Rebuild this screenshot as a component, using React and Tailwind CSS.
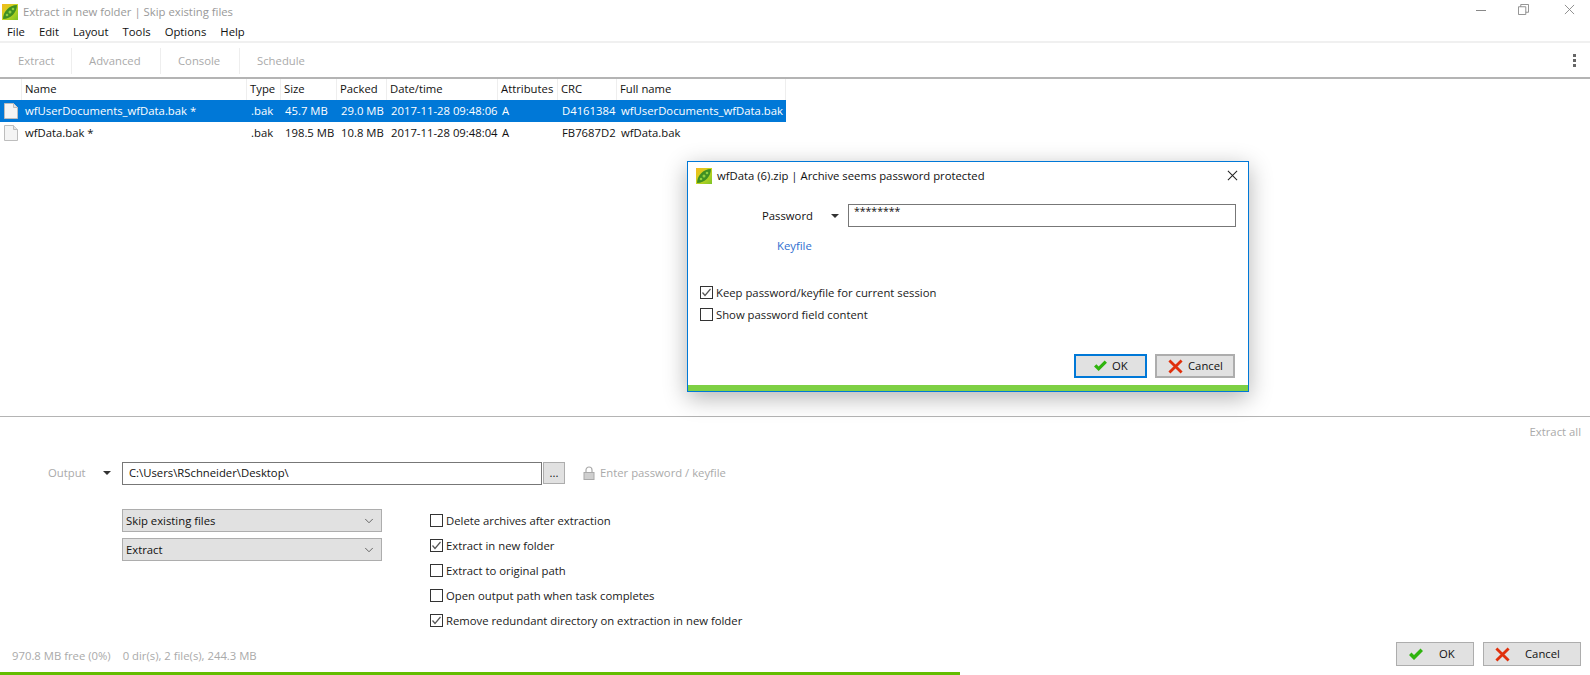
import React from 'react';
import { ChevronDown } from 'lucide-react';

const font = 'font-["Open_Sans","Noto_Sans",sans-serif]';

const columns = [
  { label: 'Name', w: 'w-[226px]', first: true },
  { label: 'Type', w: 'w-[34px]' },
  { label: 'Size', w: 'w-[56px]' },
  { label: 'Packed', w: 'w-[50px]' },
  { label: 'Date/time', w: 'w-[111px]' },
  { label: 'Attributes', w: 'w-[60px]' },
  { label: 'CRC', w: 'w-[59px]' },
  { label: 'Full name', w: 'w-[169px]' },
];

const rows = [
  ['wfUserDocuments_wfData.bak *', '.bak', '45.7 MB', '29.0 MB', '2017-11-28 09:48:06', 'A', 'D4161384', 'wfUserDocuments_wfData.bak'],
  ['wfData.bak *', '.bak', '198.5 MB', '10.8 MB', '2017-11-28 09:48:04', 'A', 'FB7687D2', 'wfData.bak'],
];

function PeaLogo({ className }) {
  return (
    <svg viewBox="0 0 16 16" className={className}>
      <defs>
        <linearGradient id="pea-bg" x1="0" y1="0" x2="1" y2="1">
          <stop offset="0" stopColor="#f7b81a" />
          <stop offset="0.5" stopColor="#c8d620" />
          <stop offset="1" stopColor="#7cc428" />
        </linearGradient>
      </defs>
      <rect width="16" height="16" fill="url(#pea-bg)" />
      <path d="M1 15 C1 8 7 1 15 1 C15 8 9 15 1 15 Z" fill="#3f8f22" />
      <circle cx="5" cy="11" r="1.3" fill="#8fd040" />
      <circle cx="8" cy="8" r="1.5" fill="#8fd040" />
      <circle cx="11" cy="5" r="1.3" fill="#8fd040" />
    </svg>
  );
}

function FileIcon() {
  return (
    <svg viewBox="0 0 14 16" className="w-[14px] h-[16px]">
      <path d="M0.5 0.5 H9.5 L13.5 4.5 V15.5 H0.5 Z" fill="#f4f4f4" stroke="#bdbdbd" />
      <path d="M9.5 0.5 V4.5 H13.5" fill="#e4e4e4" stroke="#bdbdbd" />
    </svg>
  );
}

function Check({ className }) {
  return (
    <svg viewBox="0 0 16 13" className={className}>
      <path d="M1 7 L3.5 4.5 L6 7 L12.5 0.5 L15 3 L6 12 Z" fill="#2fb40e" />
    </svg>
  );
}

function Cross({ className }) {
  return (
    <svg viewBox="0 0 16 16" className={className}>
      <path d="M1.5 1.5 L14.5 14.5 M14.5 1.5 L1.5 14.5" stroke="#e0300c" strokeWidth="3" />
    </svg>
  );
}

function Caret() {
  return <span className="block w-0 h-0 border-x-[4px] border-x-transparent border-t-[4px] border-t-[#333]" />;
}

function CheckBox({ checked, label }) {
  return (
    <label className="flex items-center gap-[3px] h-[13px] text-[#1a1a1a]">
      <span className="w-[13px] h-[13px] border border-[#333] bg-white flex items-center justify-center shrink-0">
        {checked && (
          <svg viewBox="0 0 11 11" className="w-[11px] h-[11px]">
            <path d="M1.5 5.5 L4 8.5 L9.5 2" fill="none" stroke="#555" strokeWidth="1.2" />
          </svg>
        )}
      </span>
      <span className="whitespace-nowrap">{label}</span>
    </label>
  );
}

function Combo({ label }) {
  return (
    <div className="w-[260px] h-[23px] bg-[#e1e1e1] border border-[#adadad] flex items-center justify-between pl-[3px] pr-[5px] text-[#111]">
      <span>{label}</span>
      <ChevronDown className="w-[14px] h-[14px] text-[#555]" strokeWidth={1.5} />
    </div>
  );
}

function ActionButton({ children, className }) {
  return (
    <button className={`h-[24px] bg-[#e1e1e1] flex items-center text-[#111] ${className}`}>{children}</button>
  );
}

export default function App() {
  return (
    <div className={`relative w-[1590px] h-[675px] overflow-hidden bg-white flex flex-col text-[11.3px] leading-[16px] ${font}`}>
      {/* title bar */}
      <div className="h-[23px] flex items-center shrink-0">
        <PeaLogo className="w-[16px] h-[16px] ml-[2px] mr-[5px]" />
        <span className="text-[#999]">Extract in new folder | Skip existing files</span>
        <div className="ml-auto mb-[4px] flex items-center text-[#777]">
          <svg viewBox="0 0 12 12" className="w-[12px] h-[12px] mr-[31px]">
            <path d="M1 6.5 H11" stroke="#888" />
          </svg>
          <svg viewBox="0 0 12 12" className="w-[11px] h-[11px] mr-[35px]">
            <path d="M0.5 3 H8.5 V11.5 H0.5 Z M3 3 V0.5 H11.5 V9 H8.5" fill="none" stroke="#888" />
          </svg>
          <svg viewBox="0 0 12 12" className="w-[11px] h-[11px] mr-[15px]">
            <path d="M1 1 L11 11 M11 1 L1 11" stroke="#888" />
          </svg>
        </div>
      </div>

      {/* menu */}
      <div className="h-[18px] flex items-center gap-[14px] pl-[7px] text-[#111] shrink-0">
        {['File', 'Edit', 'Layout', 'Tools', 'Options', 'Help'].map((m) => (
          <span key={m}>{m}</span>
        ))}
      </div>

      {/* toolbar */}
      <div className="h-[38px] pt-[1px] border-t-2 border-[#f0f0f0] border-b-2 border-b-[#b4b4b4] flex items-center text-[#aaa] shrink-0">
        <span className="w-[71px] pl-[18px]">Extract</span>
        <span className="w-[89px] h-[26px] border-l border-[#eee] pl-[17px] leading-[26px]">Advanced</span>
        <span className="w-[79px] h-[26px] border-l border-[#eee] pl-[17px] leading-[26px]">Console</span>
        <span className="h-[26px] border-l border-[#eee] pl-[17px] leading-[26px]">Schedule</span>
        <div className="ml-auto mr-[14px] flex flex-col gap-[2px]">
          <span className="w-[3px] h-[3px] bg-[#666]" />
          <span className="w-[3px] h-[3px] bg-[#666]" />
          <span className="w-[3px] h-[3px] bg-[#666]" />
        </div>
      </div>

      {/* file list */}
      <div className="flex-1 border-b border-[#b4b4b4]">
        <div className="flex h-[21px] items-center text-[#111]">
          {columns.map((c) => (
            <div
              key={c.label}
              className={`${c.w} h-full pb-[2px] flex items-center whitespace-nowrap border-r border-[#eeeeee] ${c.first ? 'ml-[21px] pl-[3px] border-l' : 'pl-[3px]'}`}
            >
              {c.label}
            </div>
          ))}
        </div>
        {rows.map((row, i) => (
          <div
            key={row[0]}
            className={`flex h-[22px] items-center w-[786px] ${i === 0 ? 'bg-[#0078d7] text-white' : 'text-[#111]'}`}
          >
            <div className="w-[25px] pl-[4px] flex items-center">
              <FileIcon />
            </div>
            {row.map((cell, j) => (
              <div key={j} className={`${j === 0 ? 'w-[222px]' : `${columns[j].w} pl-[4px]`} whitespace-nowrap`}>
                {cell}
              </div>
            ))}
          </div>
        ))}
      </div>

      {/* bottom panel */}
      <div className="h-[258px] shrink-0 flex flex-col">
        <div className="h-[27px] flex items-center justify-end pr-[9px] pt-[3px] text-[#aaa]">Extract all</div>
        <div className="mt-[17px] h-[24px] flex items-center">
          <span className="w-[103px] pl-[48px] text-[#aaa]">Output</span>
          <span className="w-[19px]">
            <Caret />
          </span>
          <div className="w-[420px] h-[23px] border border-[#777] flex items-center pl-[6px] text-[#111]">C:\Users\RSchneider\Desktop\</div>
          <div className="ml-[1px] w-[22px] h-[22px] bg-[#e1e1e1] border border-[#adadad] flex items-center justify-center text-[#111]">...</div>
          <svg viewBox="0 0 12 14" className="ml-[18px] w-[12px] h-[14px]">
            <path d="M3 6.5 V4 A3 3 0 0 1 9 4 V6.5" fill="none" stroke="#aaa" strokeWidth="1.2" />
            <rect x="1" y="6.5" width="10" height="7" fill="#cfcfcf" stroke="#aaa" />
          </svg>
          <span className="ml-[5px] text-[#aaa]">Enter password / keyfile</span>
        </div>
        <div className="mt-[24px] flex">
          <div className="ml-[122px] flex flex-col gap-[6px]">
            <Combo label="Skip existing files" />
            <Combo label="Extract" />
          </div>
          <div className="ml-[48px] mt-[5px] flex flex-col gap-[12px]">
            <CheckBox label="Delete archives after extraction" />
            <CheckBox checked label="Extract in new folder" />
            <CheckBox label="Extract to original path" />
            <CheckBox label="Open output path when task completes" />
            <CheckBox checked label="Remove redundant directory on extraction in new folder" />
          </div>
        </div>
        <div className="mt-auto h-[35px] flex items-start">
          <span className="ml-[12px] mt-[11px] text-[#aaa]">970.8 MB free (0%)</span>
          <span className="ml-[12px] mt-[11px] text-[#aaa]">0 dir(s), 2 file(s), 244.3 MB</span>
          <div className="ml-auto mr-[9px] mt-[5px] flex gap-[9px]">
            <ActionButton className="w-[78px] border border-[#adadad] pl-[11px]">
              <Check className="w-[16px] h-[13px]" />
              <span className="ml-[15px]">OK</span>
            </ActionButton>
            <ActionButton className="w-[98px] border border-[#adadad] pl-[11px]">
              <Cross className="w-[15px] h-[15px]" />
              <span className="ml-[15px]">Cancel</span>
            </ActionButton>
          </div>
        </div>
        <div className="h-[3px] w-[960px] bg-[#63bd00]" />
      </div>

      {/* password dialog */}
      <div className="absolute left-[687px] top-[161px] w-[562px] h-[231px] bg-white border border-[#0078d7] shadow-[0_6px_22px_rgba(0,0,0,0.3)] flex flex-col">
        <div className="h-[27px] flex items-center pl-[8px] text-[#111]">
          <PeaLogo className="w-[16px] h-[16px] mr-[5px]" />
          <span>wfData (6).zip | Archive seems password protected</span>
          <svg viewBox="0 0 12 12" className="ml-auto mr-[10px] w-[11px] h-[11px]">
            <path d="M1 1 L11 11 M11 1 L1 11" stroke="#222" strokeWidth="1.1" />
          </svg>
        </div>
        <div className="mt-[15px] h-[23px] flex items-center">
          <span className="ml-[74px] w-[69px] text-[#111]">Password</span>
          <span className="w-[17px]">
            <Caret />
          </span>
          <div className="w-[388px] h-[23px] border border-[#777] pl-[5px] text-[#111] text-[10.5px] leading-[13px]">********</div>
        </div>
        <span className="mt-[11px] ml-[89px] text-[#2f6fd0]">Keyfile</span>
        <div className="mt-[32px] ml-[12px] flex flex-col gap-[9px]">
          <CheckBox checked label="Keep password/keyfile for current session" />
          <CheckBox label="Show password field content" />
        </div>
        <div className="mt-auto flex justify-end gap-[8px] pr-[13px] pb-[7px]">
          <ActionButton className="w-[73px] border-2 border-[#0078d7] pl-[17px]">
            <Check className="w-[15px] h-[12px]" />
            <span className="ml-[4px]">OK</span>
          </ActionButton>
          <ActionButton className="w-[80px] border-2 border-[#adadad] pl-[11px]">
            <Cross className="w-[15px] h-[15px]" />
            <span className="ml-[5px]">Cancel</span>
          </ActionButton>
        </div>
        <div className="h-[6px] bg-[#7ed044]" />
      </div>
    </div>
  );
}
